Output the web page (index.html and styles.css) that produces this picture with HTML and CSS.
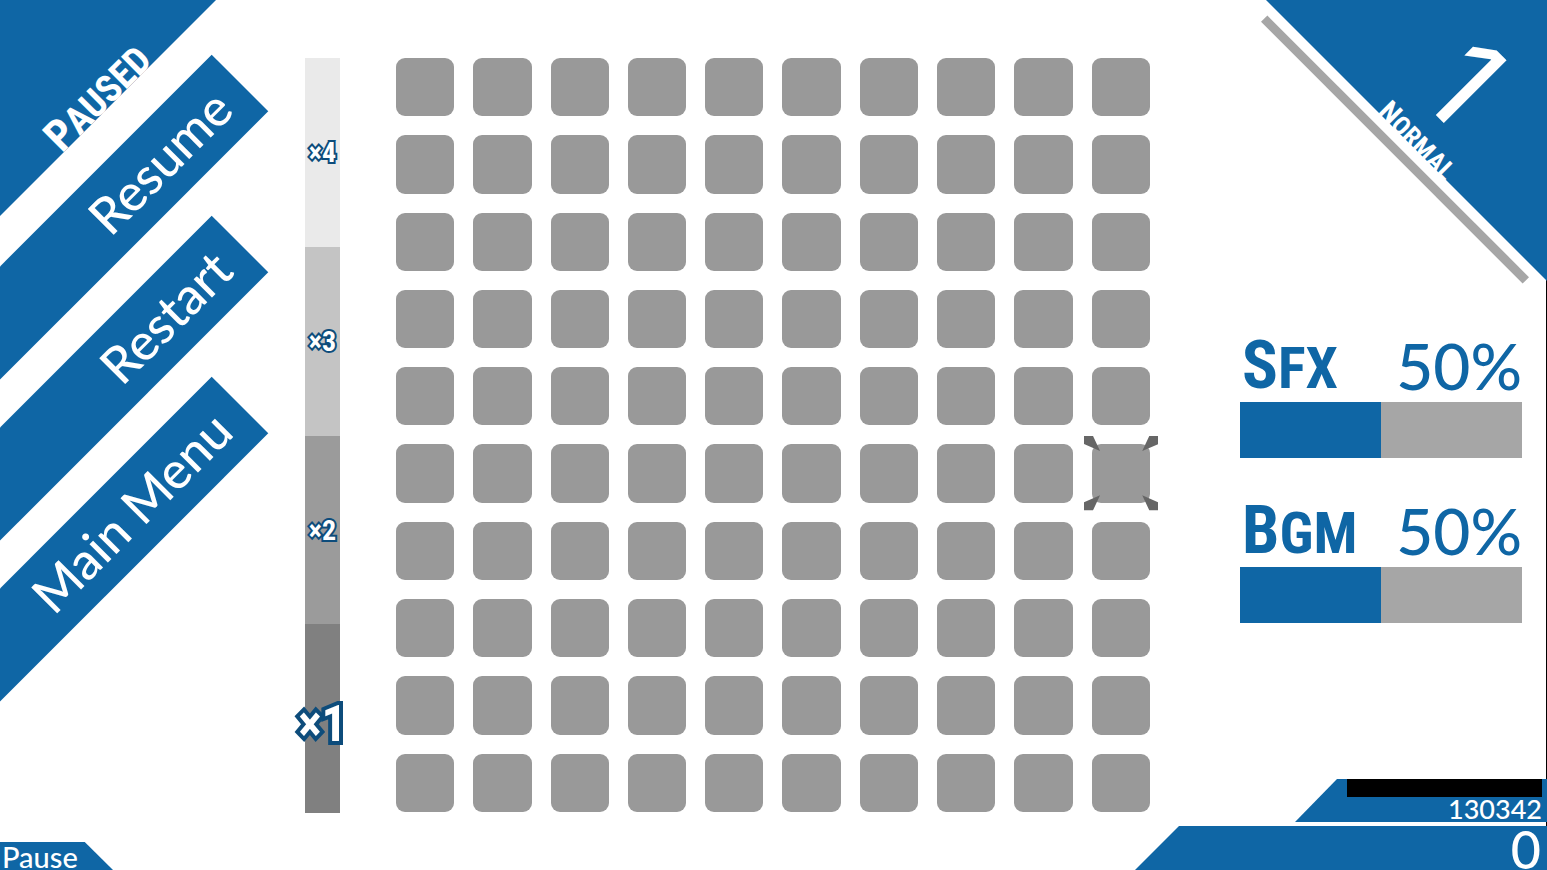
FILE: index.html
```html
<!DOCTYPE html>
<html lang="en">
<head>
<meta charset="utf-8">
<meta name="viewport" content="width=device-width, initial-scale=1">
<title>Paused</title>
<link rel="stylesheet" href="styles.css">
</head>
<body>
<main class="game">
  <section class="side side-left">
    <header class="corner corner-left">
      <h1 class="caps title">Paused</h1>
    </header>
    <nav class="menu">
      <button class="menu-item" type="button">Resume</button>
      <button class="menu-item" type="button">Restart</button>
      <button class="menu-item" type="button">Main Menu</button>
    </nav>
    <p class="hint">Pause</p>
  </section>

  <ol class="multipliers">
    <li class="mult mult-4"><span>×4</span></li>
    <li class="mult mult-3"><span>×3</span></li>
    <li class="mult mult-2"><span>×2</span></li>
    <li class="mult mult-1"><span>×1</span></li>
  </ol>

  <section class="board" id="board" aria-label="Board"></section>

  <section class="side side-right">
    <header class="corner corner-right">
      <div class="level">
        <strong class="level-number">1</strong>
        <span class="caps level-name">Normal</span>
      </div>
      <div class="timer"></div>
    </header>
    <form class="settings">
      <div class="setting">
        <label class="caps setting-name" for="sfx">Sfx</label>
        <output class="setting-value" for="sfx">50%</output>
        <input class="slider" id="sfx" type="range" min="0" max="100" value="50">
      </div>
      <div class="setting">
        <label class="caps setting-name" for="bgm">Bgm</label>
        <output class="setting-value" for="bgm">50%</output>
        <input class="slider" id="bgm" type="range" min="0" max="100" value="50">
      </div>
    </form>
    <footer class="status">
      <div class="player">
        <div class="player-name"></div>
        <p class="player-score">130342</p>
      </div>
      <p class="score">0</p>
    </footer>
  </section>
</main>
<script src="board.js"></script>
</body>
</html>
```
FILE: board.js
```js
const board = document.getElementById("board");
const selected = 59;
const cursor =
  '<svg class="cursor" viewBox="0 0 74 74" aria-hidden="true">' +
  '<path d="M0 0H9L16 15L0 8ZM74 0H65L58 15L74 8ZM0 74H9L16 59L0 66ZM74 74H65L58 59L74 66Z"/></svg>';

for (let i = 0; i < 100; i++) {
  const tile = document.createElement("div");
  tile.className = "tile";
  if (i === selected) tile.innerHTML = cursor;
  board.append(tile);
}
```
FILE: styles.css
```css
:root {
  --blue: #0f66a5;
  --navy: #0d4c7b;
  --gray: #a6a6a6;
  --condensed: "Roboto Condensed", "Liberation Sans Narrow", "DejaVu Sans Condensed", sans-serif;
}

* {
  box-sizing: border-box;
  margin: 0;
  padding: 0;
}

body {
  background: #fff;
  color: #fff;
  font-family: Lato, "Noto Sans", sans-serif;
  font-weight: 500;
  overflow: hidden;
}

.game {
  display: grid;
  grid-template-columns: minmax(0, 305fr) 35px 56px calc(100vh - 116px) minmax(0, 397fr);
  min-height: 100vh;
}

.caps {
  font-family: var(--condensed);
  font-weight: 700;
  text-transform: uppercase;
  white-space: nowrap;
}

.caps::first-letter {
  font-size: 115%;
}

/* Left side: title and menu */
.side-left {
  display: grid;
  grid-template: 1fr auto / minmax(0, 1fr);
}

.corner {
  position: relative;
  display: grid;
  place-items: center;
}

.corner::before {
  content: "";
  position: absolute;
  inset: 0;
  background: var(--blue);
}

.corner-left {
  grid-area: 1 / 1;
  width: 216px;
  height: 216px;
}

.corner-left::before {
  clip-path: polygon(0 0, 100% 0, 0 100%);
}

.title {
  font-size: 38px;
  line-height: 26px;
  transform: rotate(-45deg) translateY(-50%);
}

.menu {
  grid-area: 1 / 1;
  display: flex;
  flex-direction: column;
  gap: 81px;
  width: 240px;
  padding-top: 43px;
  z-index: 1;
}

.menu-item {
  width: 500px;
  height: 80px;
  margin-left: -260px;
  padding: 0 24px 2px 0;
  border: 0;
  background: var(--blue);
  color: #fff;
  font: 500 51px/76px Lato, "Noto Sans", sans-serif;
  text-align: right;
  transform: rotate(-45deg);
  transform-origin: right center;
}

.hint {
  width: 113px;
  height: 28px;
  padding-left: 2px;
  background: var(--blue);
  clip-path: polygon(0 0, 75% 0, 100% 100%, 0 100%);
  font-size: 29px;
  line-height: 30px;
}

/* Multiplier ladder */
.multipliers {
  display: grid;
  grid-template: repeat(4, 1fr) / minmax(0, 1fr);
  margin: 58px 0 57px;
  list-style: none;
}

.mult {
  display: flex;
  align-items: center;
  justify-content: center;
  padding-top: 2px;
  font: 700 28px/32px var(--condensed);
}

.mult span {
  -webkit-text-stroke: 4px var(--navy);
  paint-order: stroke fill;
}

.mult-4 { background: #eaeaea; }
.mult-3 { background: #c4c4c4; }
.mult-2 { background: #9b9b9b; }

.mult-1 {
  padding-top: 10px;
  background: #808080;
  font-size: 50px;
}

.mult-1 span { -webkit-text-stroke-width: 8px; }

/* Board */
.board {
  grid-column: 4;
  display: grid;
  grid-template: repeat(10, 1fr) / repeat(10, 1fr);
  gap: 19px;
  margin: 58px 0;
}

.tile {
  position: relative;
  border-radius: 9px;
  background: #999;
}

.cursor {
  position: absolute;
  inset: -8px;
  fill: #666;
}

/* Right side: level, sound settings, score */
.side-right {
  display: flex;
  flex-direction: column;
  align-items: flex-end;
  border-right: 1px solid #000;
}

.corner-right {
  width: 281px;
  height: 281px;
  margin-right: -1px;
}

.corner-right::before {
  clip-path: polygon(0 0, 100% 0, 100% 100%);
}

.level {
  display: flex;
  flex-direction: column;
  align-items: center;
  transform: rotate(45deg) translateY(-50%);
}

.level-number {
  font: 400 122px/136px Inter, sans-serif;
}

.level-name {
  padding-left: 16px;
  font-size: 26px;
  line-height: 14px;
}

.timer {
  position: absolute;
  top: 145px;
  left: -56px;
  width: 370px;
  height: 9px;
  background: var(--gray);
  transform: rotate(45deg);
}

.settings {
  display: grid;
  gap: 37px;
  width: 282px;
  margin: 49px 24px 0 0;
}

.setting {
  display: grid;
  grid-template: 72px 56px / auto auto;
  color: var(--blue);
}

.setting-name {
  padding-left: 2px;
  font-size: 58px;
  line-height: 70px;
}

.setting-value {
  font-size: 64px;
  line-height: 72px;
  text-align: right;
}

.slider {
  grid-column: 1 / -1;
  width: 100%;
  height: 56px;
  appearance: none;
  background: linear-gradient(90deg, var(--blue) 50%, var(--gray) 50%);
}

.slider::-webkit-slider-thumb {
  appearance: none;
  width: 1px;
  height: 56px;
}

.status {
  display: flex;
  flex-direction: column;
  align-items: flex-end;
  gap: 4px;
  margin: auto -1px 0 0;
  text-align: right;
}

.player {
  width: 252px;
  height: 43px;
  padding-right: 5px;
  background: var(--blue);
  clip-path: polygon(42px 0, 100% 0, 100% 100%, 0 100%);
}

.player-name {
  width: 195px;
  height: 18px;
  margin-left: auto;
  background: #000;
}

.player-score {
  font-size: 27px;
  line-height: 24px;
}

.score {
  width: 412px;
  height: 44px;
  padding-right: 6px;
  background: var(--blue);
  clip-path: polygon(44px 0, 100% 0, 100% 100%, 0 100%);
  font-size: 52px;
  line-height: 46px;
}
```
